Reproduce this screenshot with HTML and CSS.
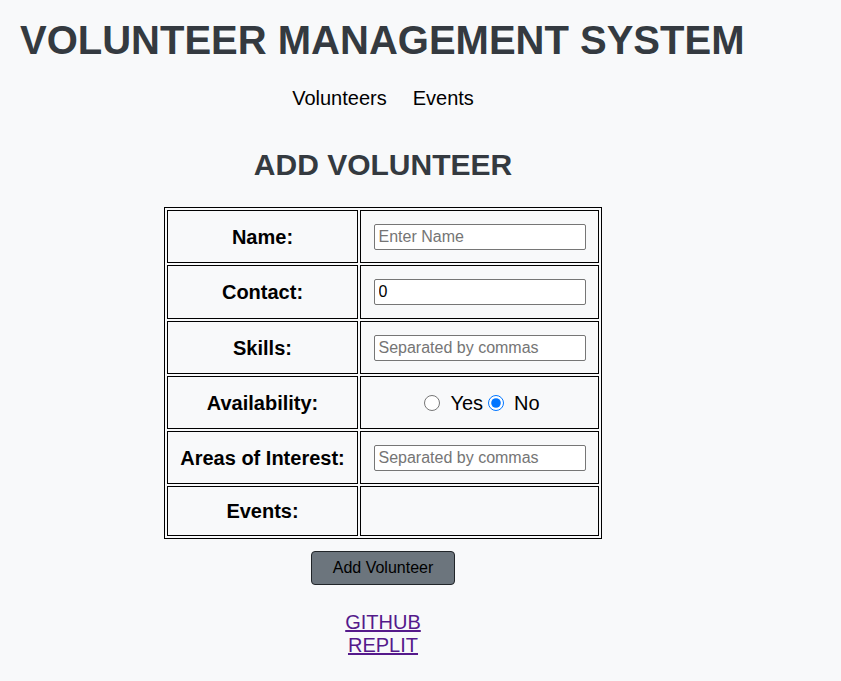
FILE: index.html
```html
<!DOCTYPE html>
<html lang="en">
<head>
<meta charset="utf-8">
<title>Volunteer Management System</title>
<link rel="stylesheet" href="styles.css">
</head>
<body>
<header class="site-header">
  <h1 class="site-title">VOLUNTEER MANAGEMENT SYSTEM</h1>
</header>
<main class="page">
  <nav class="nav">
    <a class="nav-link" href="#">Volunteers</a>
    <a class="nav-link" href="#">Events</a>
  </nav>
  <h2 class="page-title">ADD VOLUNTEER</h2>
  <form class="form">
    <table class="form-table">
      <tr class="row">
        <th class="label-cell">Name:</th>
        <td class="field-cell"><input class="text-input" type="text" placeholder="Enter Name"></td>
      </tr>
      <tr class="row row-tall">
        <th class="label-cell">Contact:</th>
        <td class="field-cell"><input class="text-input" type="text" value="0"></td>
      </tr>
      <tr class="row">
        <th class="label-cell">Skills:</th>
        <td class="field-cell"><input class="text-input" type="text" placeholder="Separated by commas"></td>
      </tr>
      <tr class="row">
        <th class="label-cell">Availability:</th>
        <td class="field-cell">
          <div class="radio-group">
            <input class="radio" type="radio" name="avail" id="yes"><label class="radio-label" for="yes">Yes</label><input class="radio" type="radio" name="avail" id="no" checked><label class="radio-label" for="no">No</label>
          </div>
        </td>
      </tr>
      <tr class="row">
        <th class="label-cell">Areas of Interest:</th>
        <td class="field-cell"><input class="text-input" type="text" placeholder="Separated by commas"></td>
      </tr>
      <tr class="row row-short">
        <th class="label-cell">Events:</th>
        <td class="field-cell"></td>
      </tr>
    </table>
    <button class="submit-btn" type="button">Add Volunteer</button>
  </form>
  <div class="links">
    <a class="ext-link" href="#">GITHUB</a>
    <a class="ext-link" href="#">REPLIT</a>
  </div>
</main>
</body>
</html>
```
FILE: styles.css
```css
* { box-sizing: border-box; }

html, body {
  margin: 0;
  padding: 0;
  background: #f8f9fa;
  font-family: "Liberation Sans", Arial, sans-serif;
  color: #000;
}

.site-header {
  padding: 17px 20px 0;
}

.site-title {
  margin: 0;
  font-size: 40px;
  font-weight: bold;
  line-height: 46px;
  color: #343a40;
}

.page {
  width: 766px;
  display: flex;
  flex-direction: column;
  align-items: center;
}

.nav {
  margin-top: 24px;
  display: flex;
  gap: 26px;
  font-size: 20px;
  line-height: 23px;
}

.nav-link {
  color: #000;
  text-decoration: none;
}

.page-title {
  margin: 38px 0 0;
  font-size: 30px;
  line-height: 34px;
  font-weight: bold;
  color: #343a40;
}

.form {
  display: flex;
  flex-direction: column;
  align-items: center;
}

.form-table {
  margin-top: 25px;
  border: 1px solid #000;
  border-spacing: 2px;
}

.row {
  height: 53px;
}

.row-tall {
  height: 54px;
}

.row-short {
  height: 50px;
}

.label-cell,
.field-cell {
  border: 1px solid #000;
  padding: 0 12px;
  text-align: center;
  vertical-align: middle;
  font-size: 20px;
  line-height: 24px;
}

.label-cell {
  width: 191px;
  font-weight: bold;
}

.field-cell {
  width: 239px;
}

.text-input {
  display: block;
  width: 212px;
  height: 26px;
  margin: 0 auto;
  padding: 0 4px;
  border: 1px solid #767676;
  border-radius: 2px;
  background: #fff;
  font-family: "Liberation Sans", Arial, sans-serif;
  font-size: 16px;
  color: #000;
}

.text-input::placeholder {
  color: #757575;
}

.radio-group {
  display: flex;
  justify-content: center;
  align-items: center;
  height: 26px;
}

.radio {
  width: 16px;
  height: 16px;
  margin: 0 10px 0 5px;
}

.radio-label {
  font-size: 20px;
}

.submit-btn {
  margin-top: 12px;
  padding: 8px 21px;
  background: #6c757d;
  border: 1px solid #212529;
  border-radius: 4px;
  font-family: "Liberation Sans", Arial, sans-serif;
  font-size: 16px;
  line-height: 16px;
  color: #000;
}

.links {
  margin-top: 26px;
  display: flex;
  flex-direction: column;
  align-items: center;
  font-size: 20px;
  line-height: 23px;
}

.ext-link {
  color: #551a8b;
  text-decoration: underline;
}
```
